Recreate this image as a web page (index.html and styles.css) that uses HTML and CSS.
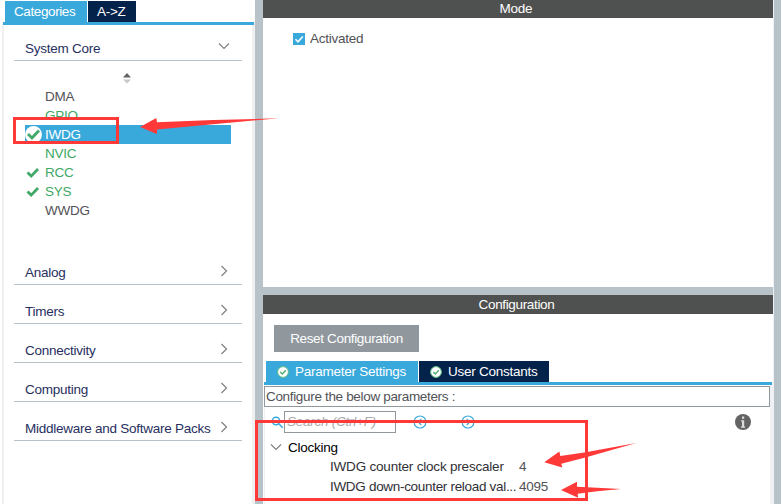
FILE: index.html
```
<!DOCTYPE html>
<html lang="en">
<head>
<meta charset="utf-8">
<title>IWDG Mode and Configuration</title>
<link rel="stylesheet" href="styles.css">
</head>
<body>
<div class="app">
  <aside class="sidebar">
    <div class="tabs side-tabs">
      <div class="tab active cat">Categories</div>
      <div class="tab az">A-&gt;Z</div>
    </div>
    <div class="side-body">
      <div class="group open"><span>System Core</span><svg width="12" height="12" viewBox="0 0 12 12"><path d="M1 3.500l5 5 5-5"/></svg></div>
      <div class="list">
        <svg class="sorter" width="8" height="11" viewBox="0 0 8 11"><path d="M0 4.500L4 0l4 4.500z" fill="#636363"/><path d="M0 6.500h8L4 10.500z" fill="#c8c8c8"/></svg>
        <div class="item"><i></i>DMA</div>
        <div class="item ok"><i></i>GPIO</div>
        <div class="item selected"><i><svg width="17" height="17" viewBox="0 0 17 17"><circle cx="8.500" cy="8.500" r="8.500" fill="#fff"/><path class="check" d="M3 8l4 4 7-7.500"/></svg></i>IWDG</div>
        <div class="item ok"><i></i>NVIC</div>
        <div class="item ok"><i><svg width="14" height="12" viewBox="0 0 14 12"><path class="check" d="M2.500 5.500l3.700 3.600L13 2"/></svg></i>RCC</div>
        <div class="item ok"><i><svg width="14" height="12" viewBox="0 0 14 12"><path class="check" d="M2.500 5.500l3.700 3.600L13 2"/></svg></i>SYS</div>
        <div class="item"><i></i>WWDG</div>
      </div>
      <div class="group"><span>Analog</span><svg width="12" height="12" viewBox="0 0 12 12"><path d="M3.500 1l5 5-5 5"/></svg></div>
      <div class="group"><span>Timers</span><svg width="12" height="12" viewBox="0 0 12 12"><path d="M3.500 1l5 5-5 5"/></svg></div>
      <div class="group"><span>Connectivity</span><svg width="12" height="12" viewBox="0 0 12 12"><path d="M3.500 1l5 5-5 5"/></svg></div>
      <div class="group"><span>Computing</span><svg width="12" height="12" viewBox="0 0 12 12"><path d="M3.500 1l5 5-5 5"/></svg></div>
      <div class="group"><span>Middleware and Software Packs</span><svg width="12" height="12" viewBox="0 0 12 12"><path d="M3.500 1l5 5-5 5"/></svg></div>
    </div>
  </aside>
  <main class="main">
    <section class="mode">
      <h2 class="bar">Mode</h2>
      <div class="activated"><svg width="12" height="12" viewBox="0 0 12 12"><path fill="#39a9dc" d="M0 0h12v12H0z"/><path d="M2.500 6.200l2.500 2.600 4.800-5.300" fill="none" stroke="#fff" stroke-width="1.500"/></svg><span>Activated</span></div>
    </section>
    <section class="config">
      <h2 class="bar conf-bar">Configuration</h2>
      <div class="reset">Reset Configuration</div>
      <div class="tabs conf-tabs">
        <div class="tab active param"><svg width="12" height="12" viewBox="0 0 12 12"><circle cx="6" cy="6" r="5.400" fill="#fff" stroke="#62bd83"/><path d="M3.300 6l2 2 3.500-3.700" fill="none" stroke="#49ad6c" stroke-width="1.300"/></svg>Parameter Settings</div>
        <div class="tab user"><svg width="12" height="12" viewBox="0 0 12 12"><circle cx="6" cy="6" r="5.400" fill="#fff" stroke="#62bd83"/><path d="M3.300 6l2 2 3.500-3.700" fill="none" stroke="#49ad6c" stroke-width="1.300"/></svg>User Constants</div>
      </div>
      <div class="panel">
        <div class="hint">Configure the below parameters :</div>
        <div class="search">
          <svg class="lens" width="13" height="13" viewBox="0 0 13 13"><circle cx="5" cy="5" r="3.700"/><path d="M7.800 7.800l4 4"/></svg>
          <div class="field">Search (Ctrl+F)</div>
          <svg class="nav prev" width="14" height="14" viewBox="0 0 14 14"><circle cx="7" cy="7" r="6"/><path d="M8.300 4L5.300 7l3 3"/></svg>
          <svg class="nav next" width="14" height="14" viewBox="0 0 14 14"><circle cx="7" cy="7" r="6"/><path d="M5.700 4l3 3-3 3"/></svg>
          <svg class="info" width="16" height="16" viewBox="0 0 16 16"><circle cx="8" cy="8" r="8" fill="#636363"/><path d="M7 2.500h2.200v2.200H7zM6 6.200h3.200v6.300h1v1.200H6v-1.200h1V7.400H6z" fill="#ddd"/></svg>
        </div>
        <div class="tree">
          <div class="node"><svg width="12" height="12" viewBox="0 0 12 12"><path d="M1 3.500l5 5 5-5"/></svg>Clocking</div>
          <div class="row"><span class="name">IWDG counter clock prescaler</span><span>4</span></div>
          <div class="row"><span class="name tight">IWDG down-counter reload val...</span><span>4095</span></div>
        </div>
      </div>
    </section>
  </main>
  <div class="edge"></div>
</div>
<svg class="notes" width="783" height="504" viewBox="0 0 783 504">
  <rect x="14.500" y="118.500" width="103" height="24"/>
  <rect x="256.500" y="421.500" width="330" height="78"/>
  <path d="M140 127l16.300-9 .7 4.300L213 120l66-1.700-66 5.900-56 5.300v4.500z"/>
  <path d="M544.300 462.300l15-10.800 1 4.500 24-3.500 52-9.500-51 14.500-24 6.200 1 3.800z"/>
  <path d="M561 490l16-8.300v5l20 1 24 1.300-24 2.200-19.300 2.500.3 4z"/>
</svg>
</body>
</html>
```
FILE: styles.css
```
* { box-sizing: border-box; }
body {
  margin: 0;
  width: 783px;
  height: 504px;
  overflow: hidden;
  background: #fff;
  font: 13.5px/19px "Liberation Sans", Arial, sans-serif;
  letter-spacing: -0.25px;
  color: #525257;
}
svg { display: block; flex: none; }
.app { display: flex; height: 504px; }

.sidebar { width: 255px; flex: none; padding: 1px 0 0 2px; display: flex; flex-direction: column; }
.tabs { display: flex; gap: 1px; height: 21px; }
.tab {
  display: flex;
  align-items: center;
  background: #03234b;
  color: #fff;
  white-space: nowrap;
}
.tab.active { background: #39a9dc; }
.side-tabs { padding-left: 3px; }
.cat { width: 82px; padding-left: 9px; letter-spacing: -0.4px; }
.az { width: 48px; padding-left: 9px; letter-spacing: -0.3px; }
.side-body {
  flex: 1;
  border: solid #f0f0f1;
  border-width: 0 3px 0 2px;
  padding: 0 10px;
}
.side-body::before { content: ""; display: block; height: 3px; margin: 0 -12px 0 -11px; background: #39a9dc; }
.group {
  display: flex;
  justify-content: space-between;
  align-items: flex-end;
  height: 39px;
  padding: 0 12px 2px 11px;
  border-bottom: 1px solid #b7c3c9;
  color: #272f61;
  white-space: nowrap;
}
.group svg { margin-bottom: 5px; }
.group.open { height: 36px; }
.group.open svg { margin-bottom: 6px; }
.group svg path, .node svg path { fill: none; stroke: #808080; stroke-width: 1.2; }
.list { height: 185px; padding: 12px 11px 0; }
.sorter { margin: 0 0 3px 98px; }
.item { display: flex; align-items: center; height: 19px; }
.item i { width: 20px; flex: none; }
.item.ok { color: #3ea866; }
.item.selected { background: #39a9dc; color: #fff; }
.check { fill: none; stroke: #41a967; stroke-width: 2.8; }

.main {
  width: 518px;
  flex: none;
  border-left: 8px solid #b7c3c9;
  display: flex;
  flex-direction: column;
}
.mode { height: 295px; border-bottom: 8px solid #b7c3c9; }
.bar {
  margin: 0;
  height: 18px;
  font: inherit;
  line-height: 18px;
  text-align: center;
  background: #4f5150;
  color: #fff;
  padding-right: 4px;
}
.conf-bar { height: 19px; line-height: 19px; letter-spacing: -0.35px; padding-right: 3px; }
.activated { display: flex; align-items: center; gap: 5px; margin: 11px 0 0 30px; height: 20px; }
.activated span { padding-bottom: 2px; }
.config { flex: 1; display: flex; flex-direction: column; }
.reset {
  width: 145px;
  height: 27px;
  margin: 11px 0 9px 11px;
  background: #90989e;
  color: #fff;
  line-height: 27px;
  text-align: center;
  letter-spacing: -0.35px;
}
.conf-tabs { padding-left: 3px; }
.param { width: 152px; padding-left: 11px; gap: 6px; }
.user { width: 130px; padding-left: 11px; gap: 6px; }
.panel {
  flex: 1;
  margin-left: 1px;
  border-right: 3px solid #eef0f3;
  border-left: 1px solid #eef0f3;
}
.panel::before { content: ""; display: block; height: 3px; margin: 0 -2px 0 -1px; background: #39a9dc; }
.hint { height: 21px; margin: 1px 0 4px -1px; border: 1px solid #90989e; padding-left: 1px; letter-spacing: -0.33px; white-space: nowrap; }
.search { display: flex; align-items: center; height: 22px; padding-left: 6px; }
.lens { fill: none; stroke: #39a9dc; stroke-width: 1.5; }
.field { width: 112px; height: 22px; border: 1px solid #90989e; padding-left: 2px; line-height: 20px; font-style: italic; color: #aaa; }
.nav { fill: none; stroke: #39a9dc; stroke-width: 1.1; }
.prev { margin-left: 17px; }
.next { margin-left: 34px; }
.info { margin-left: auto; margin-right: 19px; }
.tree { padding-top: 4px; }
.node { display: flex; align-items: center; gap: 6px; height: 20px; padding-left: 5px; color: #000; }
.row { display: flex; height: 20px; line-height: 20px; padding-left: 65px; white-space: nowrap; }
.name { width: 189px; flex: none; color: #303036; letter-spacing: -0.2px; }
.name.tight { letter-spacing: -0.31px; }

.edge { width: 8px; flex: none; border-left: 1px solid #eef0f3; background: #b7c3c9; }
.notes { position: absolute; left: 0; top: 0; fill: #ff3838; }
.notes rect { fill: none; stroke: #ff3838; stroke-width: 3; }
```
